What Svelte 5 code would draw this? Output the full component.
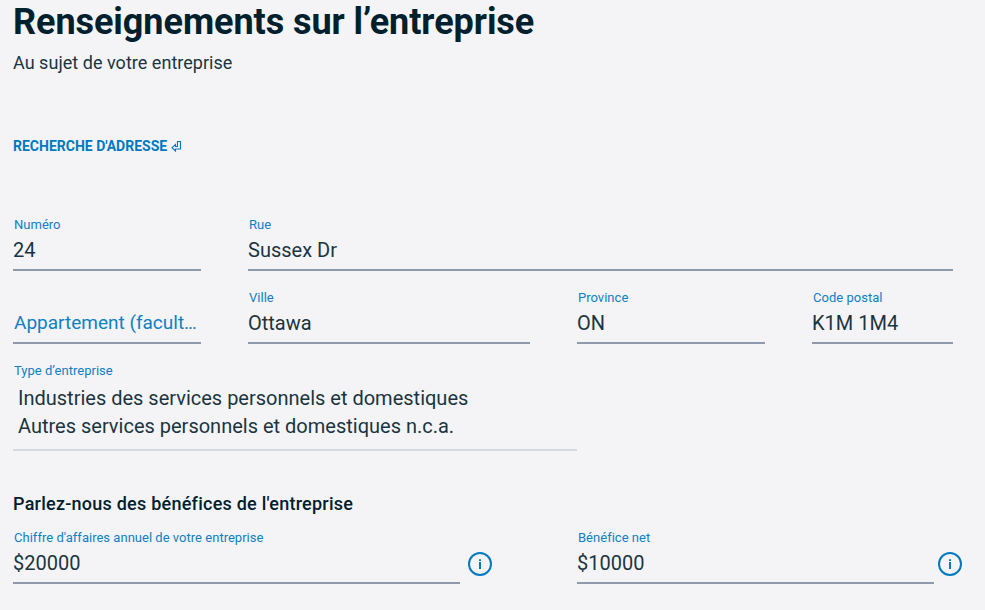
<script lang="ts">
	let numero = '24';
	let rue = 'Sussex Dr';
	let ville = 'Ottawa';
	let province = 'ON';
	let codePostal = 'K1M 1M4';
	let typeEntreprise = ['Industries des services personnels et domestiques', 'Autres services personnels et domestiques n.c.a.'];
	let montants = [
		{ label: "Chiffre d'affaires annuel de votre entreprise", valeur: '$20000' },
		{ label: 'Bénéfice net', valeur: '$10000' }
	];
</script>

<main class="page">
	<h1>Renseignements sur l’entreprise</h1>
	<p class="subtitle">Au sujet de votre entreprise</p>

	<a class="search" href="#adresse">
		<span>RECHERCHE D'ADRESSE</span>
		<svg width="11" height="12" viewBox="0 0 11 12" aria-hidden="true">
			<path d="M6.5 1.5 H9.5 V9 H4.5 V11 L1 7.7 L4.5 4.5 V6.5 H6.5 Z" fill="none" stroke="currentColor" stroke-width="1.1" />
		</svg>
	</a>

	<div class="row row-street">
		<div class="field">
			<span class="label">Numéro</span>
			<span class="value">{numero}</span>
		</div>
		<div class="field">
			<span class="label">Rue</span>
			<span class="value">{rue}</span>
		</div>
	</div>

	<div class="row row-city">
		<div class="field">
			<span class="label"></span>
			<span class="value placeholder">Appartement (facult…</span>
		</div>
		<div class="field">
			<span class="label">Ville</span>
			<span class="value">{ville}</span>
		</div>
		<div class="field">
			<span class="label">Province</span>
			<span class="value">{province}</span>
		</div>
		<div class="field">
			<span class="label">Code postal</span>
			<span class="value">{codePostal}</span>
		</div>
	</div>

	<div class="field type">
		<span class="label">Type d’entreprise</span>
		{#each typeEntreprise as ligne}
			<span class="type-line">{ligne}</span>
		{/each}
	</div>

	<h2>Parlez-nous des bénéfices de l'entreprise</h2>
	<div class="row row-money">
		{#each montants as item}
			<div class="with-info">
				<div class="field">
					<span class="label">{item.label}</span>
					<span class="value">{item.valeur}</span>
				</div>
				<svg class="info" width="24" height="24" viewBox="0 0 24 24" aria-hidden="true">
					<circle cx="12" cy="12" r="11" fill="none" stroke="currentColor" stroke-width="2" />
					<path d="M12 7.2 V9 M12 10 V17" stroke="currentColor" stroke-width="2" />
				</svg>
			</div>
		{/each}
	</div>
</main>

<style>
	:global(body) {
		background: #f4f4f7;
	}

	.page {
		box-sizing: border-box;
		height: 610px;
		padding: 0 13px;
		overflow: hidden;
		font-family: Roboto, sans-serif;
		color: #00202e;
	}

	h1 {
		margin: 0;
		font-size: 36px;
		line-height: 44px;
		font-weight: 700;
		letter-spacing: -0.05px;
		white-space: nowrap;
	}

	.subtitle {
		margin: 6px 0 0;
		font-size: 18px;
		line-height: 26px;
		letter-spacing: 0.03px;
		color: #1a3541;
	}

	.search {
		display: flex;
		align-items: center;
		gap: 4px;
		margin-top: 60px;
		height: 20px;
		font-size: 14px;
		font-weight: 700;
		color: #0079c1;
		text-decoration: none;
	}

	.row {
		display: grid;
	}

	.row-street {
		grid-template-columns: 188px 705px;
		column-gap: 47px;
		margin-top: 60px;
	}

	.row-city {
		grid-template-columns: 188px 282px 188px 141px;
		column-gap: 47px;
		margin-top: 18px;
	}

	.field {
		display: flex;
		flex-direction: column;
		min-width: 0;
		border-bottom: 2px solid #8e9aaa;
	}

	.label {
		height: 17px;
		padding-left: 1px;
		font-size: 13px;
		line-height: 17px;
		letter-spacing: 0.02px;
		color: #0f80c4;
		white-space: nowrap;
	}

	.value {
		height: 36px;
		font-size: 20px;
		line-height: 34px;
		color: #1a3541;
		white-space: nowrap;
	}

	.placeholder {
		padding-left: 1px;
		font-size: 19px;
		color: #0f80c4;
	}

	.type {
		width: 564px;
		margin-top: 18px;
		padding-bottom: 9px;
		border-bottom-color: #d5d9e0;
	}

	.type .label {
		margin-bottom: 5px;
	}

	.type-line {
		padding-left: 5px;
		font-size: 20px;
		line-height: 28px;
		color: #1a3541;
	}

	h2 {
		margin: 40px 0 12px;
		font-size: 18px;
		line-height: 26px;
		font-weight: 500;
		letter-spacing: 0.24px;
	}

	.row-money {
		grid-template-columns: 479px 385px;
		column-gap: 85px;
	}

	.with-info {
		display: flex;
		align-items: flex-end;
		justify-content: space-between;
	}

	.with-info .field {
		width: 447px;
	}

	.with-info:last-child .field {
		width: 357px;
	}

	.info {
		margin-bottom: 8px;
		color: #0079c1;
	}
</style>
